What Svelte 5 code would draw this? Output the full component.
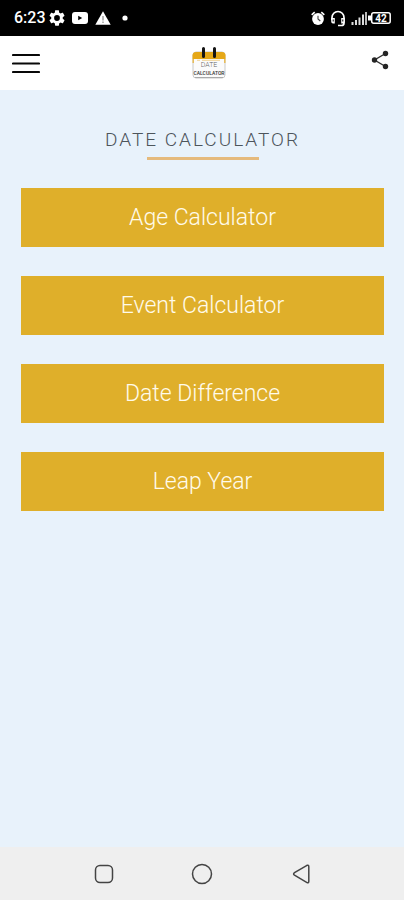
<script>
  const tools = ['Age Calculator', 'Event Calculator', 'Date Difference', 'Leap Year'];
</script>

<div class="screen">
  <div class="status">
    <div class="group">
      <span class="time">6:23</span>
      <svg class="gear" width="16" height="16" viewBox="2 2 20 20" aria-hidden="true">
        <path fill="#fff" d="M19.14 12.94c.04-.3.06-.61.06-.94 0-.32-.02-.64-.07-.94l2.03-1.58c.18-.14.23-.41.12-.61l-1.92-3.32c-.12-.22-.37-.29-.59-.22l-2.39.96c-.5-.38-1.03-.7-1.62-.94l-.36-2.54c-.04-.24-.24-.41-.48-.41h-3.84c-.24 0-.43.17-.47.41l-.36 2.54c-.59.24-1.13.57-1.62.94l-2.39-.96c-.22-.08-.47 0-.59.22L2.74 8.87c-.12.21-.08.47.12.61l2.03 1.58c-.05.3-.09.63-.09.94s.02.64.07.94l-2.03 1.58c-.18.14-.23.41-.12.61l1.92 3.32c.12.22.37.29.59.22l2.39-.96c.5.38 1.03.7 1.62.94l.36 2.54c.05.24.24.41.48.41h3.84c.24 0 .44-.17.47-.41l.36-2.54c.59-.24 1.13-.56 1.62-.94l2.39.96c.22.08.47 0 .59-.22l1.92-3.32c.12-.22.07-.47-.12-.61l-2.01-1.58zM12 15.6A3.6 3.6 0 1 1 12 8.4a3.6 3.6 0 0 1 0 7.2z" />
      </svg>
      <svg class="video" width="16" height="12" viewBox="0 0 16 12" aria-hidden="true">
        <rect width="16" height="12" rx="3" fill="#fff" />
        <path d="M6.200 3.800v4.400L10.200 6z" fill="#000" />
      </svg>
      <svg class="warn" width="16" height="14" viewBox="0 0 16 14" aria-hidden="true">
        <path d="M8 .3L15.700 13.700H.3z" fill="#fff" />
        <path d="M8 5v4.500M8 10.600v1.400" stroke="#888" stroke-width="1.200" />
      </svg>
      <svg class="dot" width="6" height="6" viewBox="0 0 6 6" aria-hidden="true"><circle cx="3" cy="3" r="2.600" fill="#fff" /></svg>
    </div>
    <div class="group">
      <svg width="14" height="15" viewBox="0 0 14 15" aria-hidden="true">
        <circle cx="7" cy="8" r="5.900" fill="#fff" />
        <path d="M.7 3.800L3.700 1.200M13.300 3.800L10.300 1.200" stroke="#fff" stroke-width="1.700" />
        <path d="M7 4.800V8l2.300 2" stroke="#444" fill="none" stroke-width="1.100" />
      </svg>
      <svg class="phones" width="16" height="17" viewBox="0 0 16 17" aria-hidden="true">
        <path d="M2 10V7.500a6 6 0 0 1 12 0V13q0 2.500-2.500 2.500H8" fill="none" stroke="#fff" stroke-width="1.700" />
        <path d="M1.200 8h3.600v5.500H3q-1.800 0-1.800-2zM14.800 8h-3.600v5.500H13q1.800 0 1.800-2z" fill="#fff" />
        <path d="M3.200 9.500v2M12.800 9.500v2" stroke="#000" />
      </svg>
      <svg class="signal" width="16" height="14" viewBox="0 0 16 14" aria-hidden="true">
        <path d="M1.500 14v-3M5 14v-5M8.500 14V6.500M12 14V3.500" stroke="#ddd" stroke-width="2" />
        <path d="M15 14V1" stroke="#bbb" stroke-width="2" />
      </svg>
      <svg class="battery" width="23" height="12" viewBox="0 0 23 12" aria-hidden="true">
        <path d="M0 3.500h3v5H0z" fill="#fff" />
        <rect x="3.700" y=".8" width="18.500" height="10.400" rx="2" fill="none" stroke="#fff" stroke-width="1.500" />
        <text x="13" y="9.500" text-anchor="middle" fill="#fff" font-size="10" font-weight="700">42</text>
      </svg>
    </div>
  </div>

  <header>
    <button class="icon" aria-label="Menu">
      <svg width="28" height="21" viewBox="0 0 28 21">
        <path d="M1 2h26M1 10.500h26M1 19h26" stroke="#080808" stroke-width="2.200" stroke-linecap="round" />
      </svg>
    </button>
    <svg class="logo" width="34" height="32" viewBox="0 0 34 32" role="img" aria-label="Date Calculator">
      <rect x="1" y="5" width="32" height="26" rx="3" fill="#fbfbfb" stroke="#c9c9c9" />
      <path d="M.5 12V8.500q0-3.500 3.500-3.500h26q3.500 0 3.500 3.500V12z" fill="#e6a817" />
      <path d="M1.200 12v4M32.800 12v4" stroke="#e8b84a" stroke-width="1.400" />
      <path d="M5 13.300h3M10 13.300h18" stroke="#ecc776" stroke-width=".8" />
      <path d="M11.500 1.500v8M22.500 1.500v8" stroke="#151515" stroke-width="3" stroke-linecap="round" />
      <text x="17" y="20" text-anchor="middle" font-size="7" font-weight="300" fill="#666">DATE</text>
      <text x="17" y="28" text-anchor="middle" font-size="5" font-weight="500" fill="#333">CALCULATOR</text>
      <path d="M3 30.500h28" stroke="#aaa" />
    </svg>
    <button class="icon" aria-label="Share">
      <svg width="18" height="20" viewBox="0 0 18 20">
        <path d="M14.500 3.500L3.500 10l11 6.500" fill="none" stroke="#303030" stroke-width="1.400" />
        <circle cx="14.500" cy="3.500" r="2.700" fill="#252525" />
        <circle cx="3.500" cy="10" r="2.700" fill="#252525" />
        <circle cx="14.500" cy="16.500" r="2.700" fill="#252525" />
      </svg>
    </button>
  </header>

  <main>
    <h1>DATE CALCULATOR</h1>
    <div class="tools">
      {#each tools as tool}
        <button class="tool">{tool}</button>
      {/each}
    </div>
  </main>

  <nav>
    <button class="icon" aria-label="Recent apps">
      <svg width="22" height="22" viewBox="0 0 22 22"><rect x="2.500" y="2.500" width="17" height="17" rx="4.500" /></svg>
    </button>
    <button class="icon" aria-label="Home">
      <svg width="22" height="22" viewBox="0 0 22 22"><circle cx="11" cy="11" r="9.500" /></svg>
    </button>
    <button class="icon" aria-label="Back">
      <svg width="22" height="22" viewBox="0 0 22 22"><path d="M17 2.300L4.500 9.600q-1.800 1.300 0 2.600L17 19.600q1.800.6 1.800-1.400V3.700q0-2-1.800-1.400z" /></svg>
    </button>
  </nav>
</div>

<style>
  :global(body) {
    margin: 0;
  }

  .screen {
    min-height: 100vh;
    display: flex;
    flex-direction: column;
    background: #e8f2fb;
    font-family: Roboto, "Liberation Sans", sans-serif;
  }

  svg {
    display: block;
    flex: none;
  }

  button {
    border: 0;
    padding: 0;
    font-family: inherit;
    cursor: pointer;
  }

  .icon {
    background: none;
  }

  .status {
    height: 36px;
    padding: 0 13px 0 14px;
    display: flex;
    align-items: center;
    justify-content: space-between;
    background: #000;
    color: #fff;
  }

  .group {
    display: flex;
    align-items: center;
  }

  .time {
    font-size: 16px;
    font-weight: 500;
    line-height: 20px;
  }

  .gear {
    margin-left: 3px;
  }

  .video,
  .warn {
    margin-left: 7px;
  }

  .dot {
    margin-left: 11px;
  }

  .phones,
  .signal {
    margin-left: 5px;
  }

  .battery {
    margin-left: 1px;
  }

  header {
    height: 54px;
    padding: 0 15px 0 12px;
    display: grid;
    grid-template-columns: 1fr auto 1fr;
    align-items: center;
    background: #fff;
  }

  header .icon:last-child {
    justify-self: end;
    margin-bottom: 6px;
  }

  header .icon:first-child {
    justify-self: start;
  }

  .logo {
    margin-left: 16px;
  }

  main {
    flex: 1;
    padding: 36px 20px 32px 21px;
    display: flex;
    flex-direction: column;
    align-items: center;
  }

  h1 {
    margin: 0 0 28px;
    font-size: 19px;
    font-weight: 300;
    line-height: 28px;
    letter-spacing: 2px;
    color: #4d555b;
  }

  h1::after {
    content: "";
    display: block;
    width: 112px;
    height: 3px;
    margin: 3px auto 0;
    background: #e5ba7c;
  }

  .tools {
    align-self: stretch;
    display: flex;
    flex-direction: column;
    gap: 29px;
  }

  .tool {
    height: 59px;
    background: #dfaf2a;
    color: #fffbea;
    font-size: 23px;
    font-weight: 300;
    line-height: 28px;
  }

  nav {
    height: 53px;
    padding: 0 54px 0 55px;
    display: flex;
    align-items: center;
    justify-content: space-around;
    background: #efefef;
  }

  nav svg {
    fill: none;
    stroke: #444;
    stroke-width: 1.5;
  }
</style>
